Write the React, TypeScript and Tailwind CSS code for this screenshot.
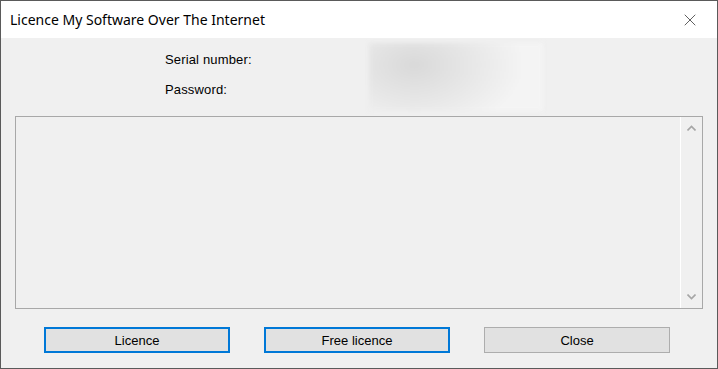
import { X } from 'lucide-react'

const sans = 'font-["Liberation_Sans",Arial,sans-serif]'

function Chevron({ down }: { down?: boolean }) {
  return (
    <svg width="9" height="6" viewBox="0 0 9 6" aria-hidden>
      <path
        d={down ? 'M0.5 0.5 4.5 4.5 8.5 0.5' : 'M0.5 5.5 4.5 1.5 8.5 5.5'}
        fill="none"
        stroke="#a6a6a6"
        strokeWidth="1.6"
      />
    </svg>
  )
}

function Button({ label, focused }: { label: string; focused?: boolean }) {
  return (
    <button
      className={
        focused
          ? `w-[186px] h-[26px] pt-[1px] bg-[#e1e1e1] border-2 border-[#0078d7] text-[13px] text-black ${sans}`
          : `w-[186px] h-[26px] pt-[1px] bg-[#e1e1e1] border border-[#adadad] text-[13px] text-black ${sans}`
      }
    >
      {label}
    </button>
  )
}

export default function App() {
  return (
    <div className="w-[718px] h-[369px] border border-[#5a5a5a] bg-[#f0f0f0] flex flex-col overflow-hidden">
      {/* Title bar */}
      <div className="h-[37px] bg-white flex items-center justify-between pl-[9px] pr-[17px]">
        <span className='text-[14px] text-black font-["Noto_Sans",sans-serif]'>
          Licence My Software Over The Internet
        </span>
        <X size={20} strokeWidth={0.75} className="text-black" />
      </div>

      {/* Fields */}
      <div className="h-[78px] flex pl-[164px] pt-[5px]">
        <div className={`w-[204px] flex flex-col text-[13px] tracking-[0.15px] text-black ${sans}`}>
          <div className="h-[20px] mt-[7px] flex items-center">Serial number:</div>
          <div className="h-[20px] mt-[10px] flex items-center">Password:</div>
        </div>
        <div className="w-[174px] h-[68px] bg-[radial-gradient(ellipse_110px_70px_at_45px_22px,#d9d9d9,#f4f4f4)] blur-[2px]" />
      </div>

      {/* Output box */}
      <div className="ml-[14px] w-[688px] h-[193px] border border-[#a8a8a8] flex">
        <div className="flex-1 border-r border-white" />
        <div className="w-[21px] flex flex-col items-center justify-between pt-[8px] pb-[8px]">
          <Chevron />
          <Chevron down />
        </div>
      </div>

      {/* Buttons */}
      <div className="flex pl-[43px] pt-[18px] gap-[34px]">
        <Button label="Licence" focused />
        <Button label="Free licence" focused />
        <Button label="Close" />
      </div>
    </div>
  )
}
